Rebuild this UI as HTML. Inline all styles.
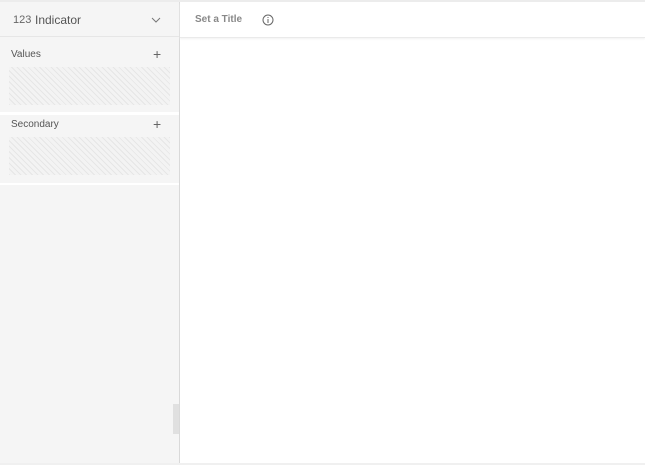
<!DOCTYPE html>
<html><head><style>
*{margin:0;padding:0;box-sizing:border-box}
body{width:645px;height:465px;overflow:hidden;background:#fff;font-family:"Liberation Sans",sans-serif;position:relative}
.top{position:absolute;left:0;top:0;width:645px;height:2px;background:#ececec}
.left{position:absolute;left:0;top:2px;width:180px;height:461px;background:#f5f5f5;border-right:1px solid #d9d9d9}
.hdr{position:absolute;left:0;top:0;width:179px;height:35px;border-bottom:1px solid #e6e6e6}
.t{position:absolute;color:#555;font-size:11px}
.hatch{position:absolute;left:9px;width:161px;background:repeating-linear-gradient(45deg,#e6e6e6 0 1px,#f3f3f3 1px 4px)}
.gap{position:absolute;left:0;width:179px;background:#fff}
.plus{position:absolute;left:153px;font-size:14px;color:#666;font-weight:300}
.grip{position:absolute;left:173px;width:6px;height:30px;background:#e0e0e0}
.right{position:absolute;left:180px;top:2px;width:465px;height:36px;border-bottom:1px solid #eaeaea;box-shadow:0 1px 2px #f2f2f2}
.bottom{position:absolute;left:0;top:463px;width:645px;height:2px;background:#f0f0f0}
</style></head><body>
<div class="top"></div>
<div class="left">
 <div class="hdr">
  <div class="t" style="left:13px;top:12px;font-size:11px;color:#666">123</div>
  <div class="t" style="left:35px;top:11px;font-size:12px;color:#555">Indicator</div>
  <svg style="position:absolute;left:151px;top:15px" width="10" height="6"><path d="M1 1L5 5L9 1" stroke="#777" fill="none" stroke-width="1"/></svg>
 </div>
 <div class="t" style="left:11px;top:47px;font-size:10px">Values</div>
 <div class="plus" style="top:44px">+</div>
 <div class="hatch" style="top:65px;height:38px"></div>
 <div class="gap" style="top:110px;height:3px"></div>
 <div class="t" style="left:11px;top:117px;font-size:10px">Secondary</div>
 <div class="plus" style="top:114px">+</div>
 <div class="hatch" style="top:135px;height:38px"></div>
 <div class="gap" style="top:181px;height:2px"></div>
 <div class="grip" style="top:402px"></div>
</div>
<div class="right">
 <div class="t" style="left:15px;top:12px;font-size:10px;font-weight:bold;color:#888">Set a Title</div>
 <svg style="position:absolute;left:82px;top:12px" width="12" height="12"><circle cx="6" cy="6" r="5" stroke="#666" fill="none"/><path d="M6 5V9M6 3V4" stroke="#666"/></svg>
</div>
<div class="bottom"></div>
</body></html>
